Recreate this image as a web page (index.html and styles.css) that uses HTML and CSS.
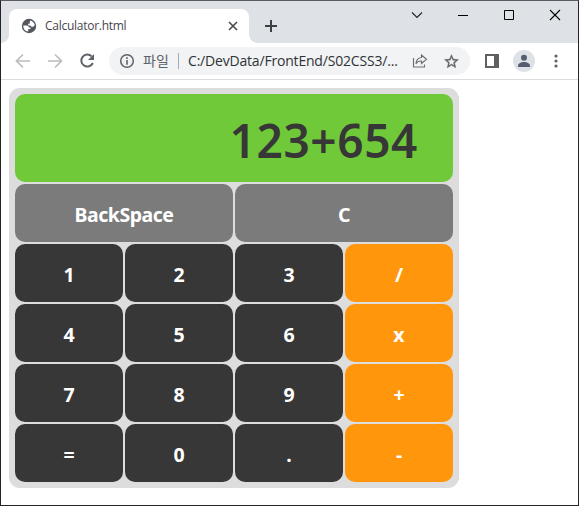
FILE: index.html
```html
<!DOCTYPE html>
<html lang="ko">
<head>
<meta charset="utf-8">
<title>Calculator.html</title>
<link rel="stylesheet" href="styles.css">
</head>
<body>
<div class="window">
  <div class="tabstrip">
    <div class="tab">
      <svg class="favicon" width="16" height="16" viewBox="0 0 16 16"><circle cx="8" cy="8" r="7.200" fill="#54585d"/><path fill="#fff" d="M2.300 7.600h3.200c1.500 0 2.300.8 2.300 2h1.700v1.500H7.200v2.500C4.300 13.400 2.100 11 2.300 7.600zM9.200 2.400c2.400.5 4.200 2.300 4.600 4.700l-1.400 1.700h-2L9.300 7.500H7.200V5.700h1.500V4.200z"/></svg>
      <span class="tab-title">Calculator.html</span>
      <svg class="tab-close" width="16" height="16" viewBox="0 0 16 16"><path d="M4 4l8 8M12 4l-8 8" stroke="#46494d" stroke-width="1.600"/></svg>
    </div>
    <svg class="new-tab" width="16" height="16" viewBox="0 0 16 16"><path d="M8 2v12M2 8h12" stroke="#3c4043" stroke-width="2"/></svg>
    <div class="controls">
      <svg width="46" height="28" viewBox="0 0 46 28"><path d="M18 11.500l5 5 5-5" fill="none" stroke="#222" stroke-width="1.100"/></svg>
      <svg width="46" height="28" viewBox="0 0 46 28"><path d="M18 14.500h10" stroke="#000"/></svg>
      <svg width="46" height="28" viewBox="0 0 46 28"><path d="M18.500 9.500h9v9h-9z" fill="none" stroke="#000"/></svg>
      <svg width="46" height="28" viewBox="0 0 46 28"><path d="M18 9l10 10M28 9l-10 10" stroke="#000" stroke-width="1.100"/></svg>
    </div>
  </div>
  <div class="toolbar">
    <svg class="slot" viewBox="0 0 32 32"><path d="M23 16H10M16 9.500L9.500 16l6.500 6.500" fill="none" stroke="#babcbe" stroke-width="1.700"/></svg>
    <svg class="slot" viewBox="0 0 32 32"><path d="M9 16h13M16 9.500l6.500 6.500-6.500 6.500" fill="none" stroke="#babcbe" stroke-width="1.700"/></svg>
    <svg class="slot" viewBox="0 0 32 32"><path d="M20.600 11.400A6 6 0 1 0 21.800 18" fill="none" stroke="#5f6368" stroke-width="2"/><path d="M23 9v6h-6z" fill="#5f6368"/></svg>
    <div class="omnibox">
      <svg class="info" width="16" height="16" viewBox="0 0 16 16"><circle cx="8" cy="8" r="6.300" fill="none" stroke="#5f6368" stroke-width="1.500"/><path d="M8 4.200v1.700M8 7.100v4.700" stroke="#5f6368" stroke-width="1.600"/></svg>
      <span class="scheme">파일</span>
      <span class="divider"></span>
      <span class="url">C:/DevData/FrontEnd/S02CSS3/...</span>
      <svg class="share" width="16" height="16" viewBox="0 0 16 16"><path d="M1.500 5v9h11v-2.500M9.500 2l5 4.200-5 4.200V8C6.800 8 5.100 8.800 3.900 10.700 4.200 7.400 6 4.900 9.500 4.500z" fill="none" stroke="#6b6f74" stroke-width="1.150"/></svg>
      <svg class="star" width="17" height="17" viewBox="0 0 24 24"><path fill="#5f6368" d="M22 9.240l-7.190-.62L12 2 9.190 8.630 2 9.240l5.460 4.730L5.820 21 12 17.270 18.180 21l-1.630-7.030zM12 15.400l-3.760 2.270 1-4.280-3.320-2.880 4.380-.38L12 6.100l1.710 4.040 4.380.38-3.320 2.880 1 4.280z" stroke="#5f6368" stroke-width=".4"/></svg>
    </div>
    <div class="actions">
      <svg class="slot" viewBox="0 0 32 32"><path fill="#5f6062" fill-rule="evenodd" d="M9 9h14v14H9zM11 11v10h7V11z"/></svg>
      <svg class="slot" viewBox="0 0 32 32"><circle cx="16" cy="16" r="11" fill="#dee1e6"/><circle cx="16" cy="12.800" r="3" fill="#555d70"/><path d="M10 22v-1.500c0-2.200 3.500-3.500 6-3.500s6 1.300 6 3.500V22z" fill="#555d70"/></svg>
      <svg class="slot" viewBox="0 0 32 32" fill="#5f6368"><circle cx="16" cy="11" r="1.600"/><circle cx="16" cy="16" r="1.600"/><circle cx="16" cy="21" r="1.600"/></svg>
    </div>
  </div>
  <main class="page">
    <div class="calculator">
      <div class="display">123+654</div>
      <div class="key wide">BackSpace</div>
      <div class="key wide">C</div>
      <div class="key">1</div>
      <div class="key">2</div>
      <div class="key">3</div>
      <div class="key operator">/</div>
      <div class="key">4</div>
      <div class="key">5</div>
      <div class="key">6</div>
      <div class="key operator">x</div>
      <div class="key">7</div>
      <div class="key">8</div>
      <div class="key">9</div>
      <div class="key operator">+</div>
      <div class="key">=</div>
      <div class="key">0</div>
      <div class="key">.</div>
      <div class="key operator">-</div>
    </div>
  </main>
</div>
</body>
</html>
```
FILE: styles.css
```css
* {
  box-sizing: border-box;
}

body {
  margin: 0;
  font-family: "Noto Sans", "Noto Sans CJK KR", sans-serif;
}

svg {
  display: block;
  flex: none;
}

.window {
  height: 506px;
  display: flex;
  flex-direction: column;
  overflow: hidden;
  background: #fff;
  border: 1px solid #25232a;
  border-top-color: #5c5b62;
}

.tabstrip {
  display: flex;
  flex: none;
  height: 42px;
  padding: 8px 0 0 8px;
  background: #dee1e6;
}

.tab {
  position: relative;
  display: flex;
  align-items: center;
  width: 240px;
  height: 34px;
  padding: 0 8px 0 12px;
  background: #fff;
  border-radius: 8px 8px 0 0;
}

.tab::before,
.tab::after {
  content: "";
  position: absolute;
  bottom: 0;
  width: 8px;
  height: 8px;
}

.tab::before {
  left: -8px;
  background: radial-gradient(circle at 0 0, transparent 7.5px, #fff 8px);
}

.tab::after {
  right: -8px;
  background: radial-gradient(circle at 100% 0, transparent 7.5px, #fff 8px);
}

.tab-title {
  flex: 1;
  margin: -2px 0 0 8px;
  font-family: "Open Sans", sans-serif;
  font-size: 12px;
  letter-spacing: -0.27px;
  color: #45484c;
}

.new-tab {
  margin: 9px 0 0 14px;
}

.controls {
  display: flex;
  margin: -8px 0 0 auto;
}

.toolbar {
  display: flex;
  flex: none;
  align-items: center;
  height: 37px;
  padding: 0 6px;
  border-bottom: 1px solid #dadce0;
}

.slot {
  width: 32px;
  height: 32px;
}

.omnibox {
  display: flex;
  align-items: center;
  width: 361px;
  height: 28px;
  margin-left: 6px;
  padding: 0 10px;
  border-radius: 14px;
  background: #f1f3f4;
  white-space: nowrap;
}

.scheme {
  width: 27px;
  margin-left: 8px;
  font-size: 14px;
  line-height: 20px;
  color: #5f6368;
}

.divider {
  width: 1px;
  height: 16px;
  margin-left: 8px;
  background: #a5a8ac;
}

.url {
  width: 212px;
  margin-left: 9px;
  font-family: "Open Sans", sans-serif;
  font-size: 14px;
  letter-spacing: -0.19px;
  line-height: 20px;
  color: #303236;
}

.share {
  margin-left: 12px;
}

.star {
  margin-left: auto;
}

.actions {
  display: flex;
  margin-left: auto;
}

.page {
  padding: 8px;
}

.calculator {
  display: grid;
  grid-template-columns: repeat(4, 108px);
  grid-template-rows: 88px repeat(5, 58px);
  gap: 2px;
  width: 450px;
  padding: 6px;
  border-radius: 11px;
  background: #ddd;
}

.display,
.key {
  display: flex;
  align-items: center;
  border-radius: 10px;
}

.display {
  grid-column: 1 / -1;
  justify-content: flex-end;
  padding: 3px 35px 0 0;
  background: #70c938;
  color: #373737;
  font-size: 46px;
  font-weight: 600;
  letter-spacing: 0.6px;
  line-height: 60px;
}

.key {
  justify-content: center;
  padding-top: 4px;
  background: #373737;
  color: #fff;
  font-size: 19.5px;
  font-weight: 700;
  line-height: 28px;
}

.wide {
  grid-column: span 2;
  background: #7b7b7b;
  letter-spacing: -0.5px;
}

.operator {
  background: #ff960b;
}
```
